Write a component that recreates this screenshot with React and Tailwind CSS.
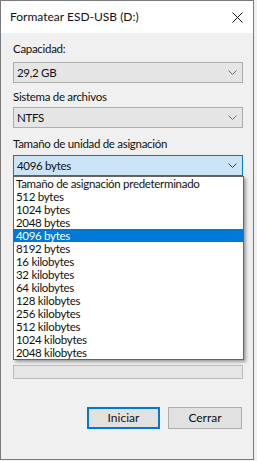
import React from "react";

const Chevron = ({ color = "#606060" }) => (
  <svg width="9" height="5" viewBox="0 0 9 5" className="block">
    <path d="M0.5 0.5 L4.5 4.5 L8.5 0.5" fill="none" stroke={color} strokeWidth="1" />
  </svg>
);

const items = [
  "Tamaño de asignación predeterminado",
  "512 bytes",
  "1024 bytes",
  "2048 bytes",
  "4096 bytes",
  "8192 bytes",
  "16 kilobytes",
  "32 kilobytes",
  "64 kilobytes",
  "128 kilobytes",
  "256 kilobytes",
  "512 kilobytes",
  "1024 kilobytes",
  "2048 kilobytes",
];

function Combo({ value, focused, children }) {
  return (
    <div
      className={
        "relative h-[21px] w-[230px] border flex items-center pl-[3px] pr-[5px] justify-between " +
        (focused ? "bg-[#cce4f7] border-[#0078d7]" : "bg-[#e5e5e5] border-[#adadad]")
      }
    >
      <span className="leading-[16px] text-[11.5px] tracking-[-0.3px]">{value}</span>
      <Chevron color={focused ? "#404040" : "#707070"} />
      {children}
    </div>
  );
}

export default function App() {
  return (
    <div
      className="w-[257px] h-[461px] bg-[#f0f0f0] text-[12px] text-[#111]"
      style={{ fontFamily: 'Lato, "Noto Sans", sans-serif' }}
    >
      <div className="w-[254px] h-[460px] border border-[#7a7a7a] bg-[#f0f0f0] flex flex-col">
        <div className="h-[32px] bg-white flex items-center justify-between shrink-0">
          <span className="pl-[9px] leading-[16px]">Formatear ESD-USB (D:)</span>
          <div className="w-[31px] h-full flex items-center justify-center">
            <svg width="11" height="11" viewBox="0 0 11 11">
              <path d="M0.5 0.5 L10.5 10.5 M10.5 0.5 L0.5 10.5" stroke="#111" strokeWidth="1" />
            </svg>
          </div>
        </div>

        <div className="flex flex-col pl-[12px] flex-1 text-[11.5px] tracking-[-0.3px]">
          <div className="mt-[8px] mb-[5px] h-[16px] leading-[16px]">Capacidad:</div>
          <Combo value="29,2 GB" />

          <div className="mt-[6px] mb-[2px] h-[16px] leading-[16px]">Sistema de archivos</div>
          <Combo value="NTFS" />

          <div className="mt-[8px] mb-[3px] h-[16px] leading-[16px]">Tamaño de unidad de asignación</div>
          <Combo value="4096 bytes" focused>
            <div className="absolute left-[-1px] top-[20px] w-[231px] border border-[#646464] bg-white shadow-[2px_2px_3px_rgba(0,0,0,0.35)] z-10 text-[11.5px] tracking-[-0.3px]">
              {items.map((it, i) => (
                <div
                  key={it}
                  className={
                    "h-[13px] leading-[13px] pl-[2px] whitespace-nowrap overflow-hidden " +
                    (i === 4 ? "bg-[#0078d7] text-white" : "")
                  }
                >
                  {it}
                </div>
              ))}
            </div>
          </Combo>

          <div className="h-[189px]" />

          <div className="w-[230px] h-[14px] border border-[#bcbcbc] bg-[#e6e6e6]" />

          <div className="mt-[28px] w-[229px] flex justify-end gap-[8px] text-[12px] tracking-normal">
            <button className="w-[73px] h-[22px] border-2 border-[#0078d7] bg-[#e1e1e1] flex items-center justify-center leading-[16px]">
              Iniciar
            </button>
            <button className="w-[74px] h-[22px] border border-[#adadad] bg-[#e1e1e1] flex items-center justify-center leading-[16px]">
              Cerrar
            </button>
          </div>
        </div>
      </div>
    </div>
  );
}
